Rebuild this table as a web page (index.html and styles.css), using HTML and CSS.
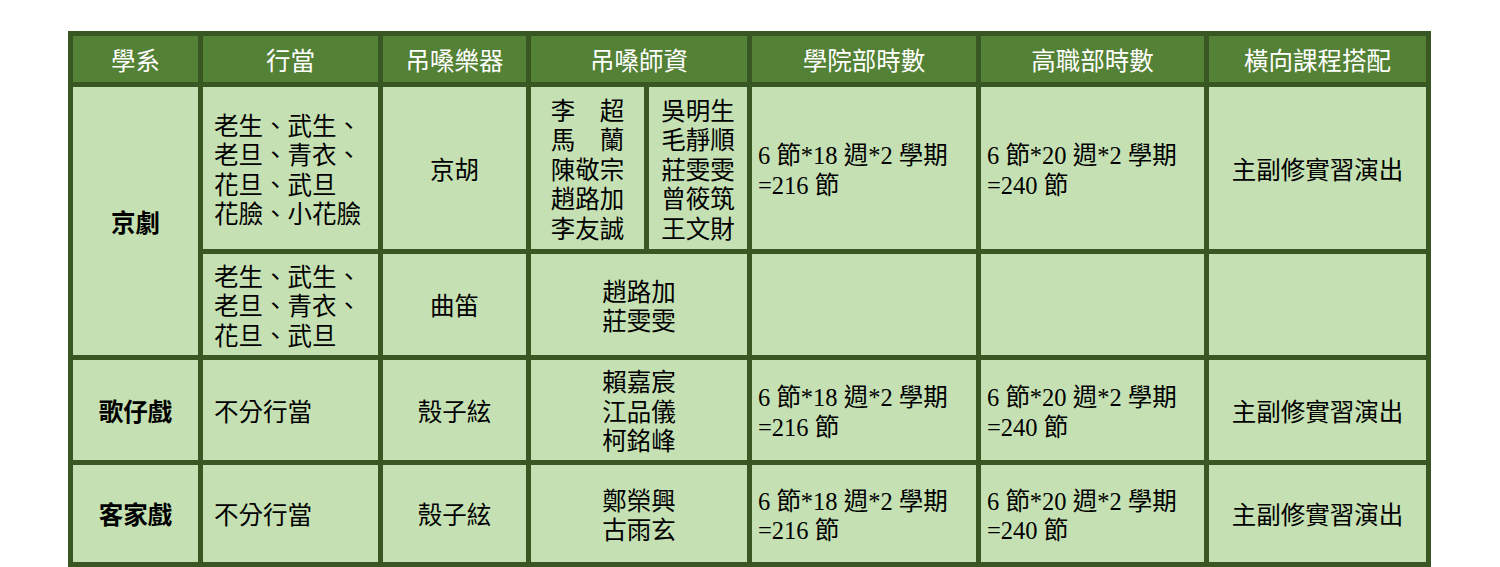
FILE: index.html
```html
<!DOCTYPE html>
<html lang="zh-Hant">
<head>
<meta charset="utf-8">
<title>學系課程表</title>
<link rel="stylesheet" href="styles.css">
</head>
<body>
<div class="page">
  <div class="table">
    <div class="cell head">學系</div>
    <div class="cell head">行當</div>
    <div class="cell head">吊嗓樂器</div>
    <div class="cell head span2">吊嗓師資</div>
    <div class="cell head">學院部時數</div>
    <div class="cell head">高職部時數</div>
    <div class="cell head">橫向課程搭配</div>

    <div class="cell dept rows2">京劇</div>
    <div class="cell left">老生、武生、<br>老旦、青衣、<br>花旦、武旦<br>花臉、小花臉</div>
    <div class="cell">京胡</div>
    <div class="cell">李　超<br>馬　蘭<br>陳敬宗<br>趙路加<br>李友誠</div>
    <div class="cell">吳明生<br>毛靜順<br>莊雯雯<br>曾筱筑<br>王文財</div>
    <div class="cell hours">6 節*18 週*2 學期<br>=216 節</div>
    <div class="cell hours">6 節*20 週*2 學期<br>=240 節</div>
    <div class="cell">主副修實習演出</div>

    <div class="cell left">老生、武生、<br>老旦、青衣、<br>花旦、武旦</div>
    <div class="cell">曲笛</div>
    <div class="cell span2">趙路加<br>莊雯雯</div>
    <div class="cell"></div>
    <div class="cell"></div>
    <div class="cell"></div>

    <div class="cell dept">歌仔戲</div>
    <div class="cell left">不分行當</div>
    <div class="cell">殼子絃</div>
    <div class="cell span2">賴嘉宸<br>江品儀<br>柯銘峰</div>
    <div class="cell hours">6 節*18 週*2 學期<br>=216 節</div>
    <div class="cell hours">6 節*20 週*2 學期<br>=240 節</div>
    <div class="cell">主副修實習演出</div>

    <div class="cell dept">客家戲</div>
    <div class="cell left">不分行當</div>
    <div class="cell">殼子絃</div>
    <div class="cell span2">鄭榮興<br>古雨玄</div>
    <div class="cell hours">6 節*18 週*2 學期<br>=216 節</div>
    <div class="cell hours">6 節*20 週*2 學期<br>=240 節</div>
    <div class="cell">主副修實習演出</div>
  </div>
</div>
</body>
</html>
```

FILE: styles.css
```css
html, body {
  margin: 0;
  padding: 0;
  background: #ffffff;
}

.page {
  display: flex;
  justify-content: flex-start;
  padding: 31px 0 0 68px;
}

.table {
  display: grid;
  grid-template-columns: 125px 175px 143px 113px 98px 224px 223px 217px;
  grid-template-rows: 46px 162px 101px 100px 97px;
  gap: 5px;
  padding: 5px;
  background: #385723;
  font-family: "Liberation Serif", "Noto Sans CJK TC", serif;
  font-size: 24.5px;
  line-height: 29.5px;
  color: #000000;
}

.cell {
  background: #c5e0b3;
  display: flex;
  align-items: center;
  justify-content: center;
  text-align: center;
  white-space: nowrap;
  padding-top: 5px;
}

.head {
  background: #538135;
  color: #ffffff;
}

.span2 {
  grid-column: span 2;
}

.rows2 {
  grid-row: span 2;
}

.dept {
  font-weight: bold;
}

.left {
  justify-content: flex-start;
  text-align: left;
  padding-left: 11px;
}

.hours {
  justify-content: flex-start;
  text-align: left;
  padding-left: 6px;
}
```
